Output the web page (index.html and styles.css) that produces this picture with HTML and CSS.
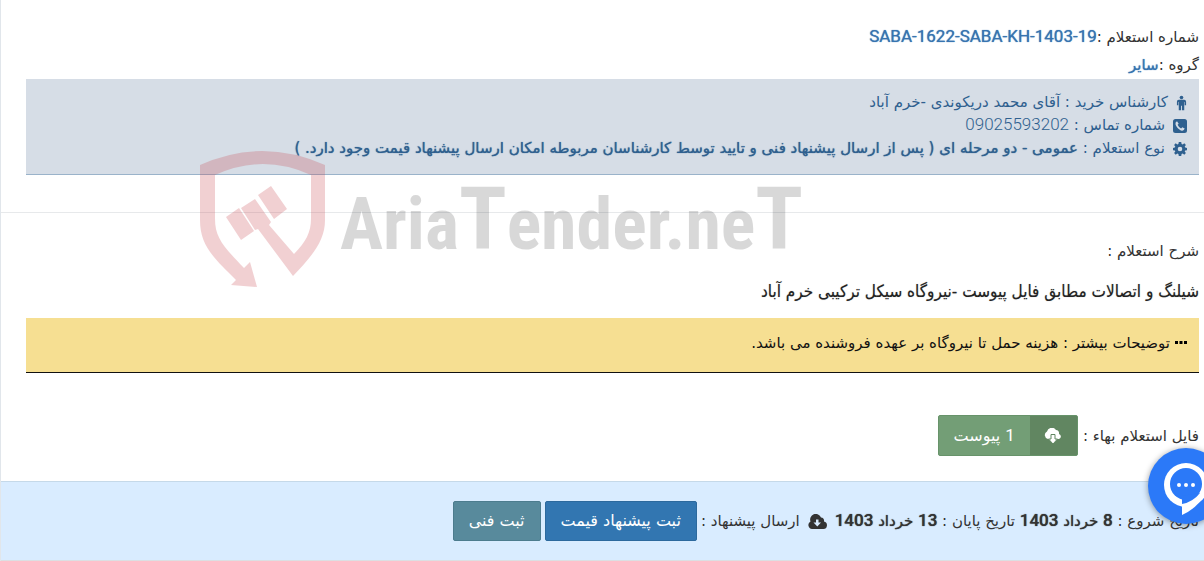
FILE: index.html
```html
<!DOCTYPE html>
<html lang="fa" dir="rtl">
<head>
<meta charset="utf-8">
<title>استعلام</title>
<link rel="stylesheet" href="styles.css">
</head>
<body>
<main class="page">
  <section class="summary">
    <p class="line">شماره استعلام :<a class="ref" href="#"><bdi class="num">SABA-1622-SABA-KH-1403-19</bdi></a></p>
    <p class="line">گروه :<a class="ref" href="#">سایر</a></p>
    <div class="info">
      <p class="info-row"><svg class="icon man" viewBox="0 0 12 16"><circle cx="6" cy="2" r="2"/><path d="M3 4.500h6q2 0 2 2v4H9.500V7H9v9H6.500v-5h-1v5H3V7h-.5v3.500H1v-4q0-2 2-2z"/></svg><span>کارشناس خرید : آقای محمد دریکوندی -خرم آباد</span></p>
      <p class="info-row"><svg class="icon" viewBox="0 0 14 14"><path fill-rule="evenodd" d="M2.500 0h9Q14 0 14 2.500v9q0 2.500-2.500 2.500h-9Q0 14 0 11.500v-9Q0 0 2.500 0zM4 2.300Q2 3.500 2.500 5.200C3.200 8 6 11 9 11.700q2 .3 2.700-2.100L9.300 8.200l-1.200 1.200Q5.500 8 4.600 5.700l1.100-1z"/></svg><span>شماره تماس : <span class="num">09025593202</span></span></p>
      <p class="info-row"><svg class="icon" viewBox="0 0 14 14"><path fill-rule="evenodd" d="M5.800 0h2.400l.4 1.900 1.100.5L11.300 1.300 12.900 3l-1.200 1.500.5 1.100 1.800.3v2.300l-1.800.3-.5 1.100 1.200 1.500-1.600 1.700-1.600-1.200-1.100.5L8.200 14H5.800l-.4-1.900-1.100-.5-1.600 1.200L1.100 11.100l1.200-1.500-.5-1.100L0 8.200V5.900l1.800-.3.500-1.100L1.100 3l1.600-1.700 1.600 1.100 1.100-.5zM7 4.700a2.300 2.300 0 1 0 0 4.600 2.300 2.300 0 0 0 0-4.600z"/></svg><span>نوع استعلام : <b class="strong">عمومی - دو مرحله ای ( پس از ارسال پیشنهاد فنی و تایید توسط کارشناسان مربوطه امکان ارسال پیشنهاد قیمت وجود دارد. )</b></span></p>
    </div>
  </section>
  <section class="details">
    <p class="line">شرح استعلام :</p>
    <h1 class="title">شیلنگ و اتصالات مطابق فایل پیوست -نیروگاه سیکل ترکیبی خرم آباد</h1>
    <div class="note"><svg class="dots" viewBox="0 0 12 4"><path d="M0 0h3v3H0zM4.500 0h3v3h-3zM9 0h3v3H9z"/></svg><span>توضیحات بیشتر : هزینه حمل تا نیروگاه بر عهده فروشنده می باشد.</span></div>
    <div class="files">
      <span>فایل استعلام بهاء :</span>
      <button class="btn attach" type="button"><span class="attach-icon"><svg class="cloud" viewBox="0 0 18 16"><path fill="#fff" d="M4 11a4 4 0 0 1-1-7.500A5 5 0 0 1 12 2a3.500 3.500 0 0 1 3 4 2.600 2.600 0 0 1 0 5z"/><path fill="#fff" stroke="#618661" d="M7 6.500h4V11h2.500L9 16l-4.500-5H7z"/></svg></span><span class="attach-text"><span class="num">1</span> پیوست</span></button>
    </div>
  </section>
  <footer class="actions">
    <span>تاریخ شروع : <b><span class="num">8</span> خرداد <span class="num">1403</span></b> تاریخ پایان : <b><span class="num">13</span> خرداد <span class="num">1403</span></b></span>
    <svg class="cloud-dark" viewBox="0 0 19 15"><path fill-rule="evenodd" d="M4 15a4 4 0 0 1-1.500-7.500A5.500 5.500 0 0 1 13 3.500a3.500 3.500 0 0 1 3 4A3.800 3.800 0 0 1 15 15zM8 5.500v3H5.500L9.300 12.500 13 8.500h-2.500v-3z"/></svg>
    <span>ارسال پیشنهاد :</span>
    <button class="btn price" type="button">ثبت پیشنهاد قیمت</button>
    <button class="btn tech" type="button">ثبت فنی</button>
  </footer>
  <div class="watermark" dir="ltr">
    <svg class="shield" viewBox="0 0 126 138"><path d="M0 15Q62-13 125 15V70C125 91 112 106 93 126L58 79 55 80 41 58 55 49 71 72 69 75 94 104C106 92 111 82 111 69V25Q63 3 15 25V69C15 88 24 97 44 118L50 112 57 137 31 135 36 130C14 108 0 96 0 70zM26 67L39 58 54 81 41 90zM58 45L71 36 87 59 74 69z"/></svg>
    <span class="wordmark">Aria<span class="tall">T</span>ender.ne<span class="tall">T</span></span>
  </div>
  <button class="chat" type="button" aria-label="گفتگو"><svg class="chat-icon" viewBox="0 0 76 76"><g fill="#fff"><circle cx="38" cy="37" r="22"/><path d="M34 54V67Q54 58 60 38z"/></g><circle cx="38" cy="36" r="16" fill="#2b79f8"/><path d="M34 48v8q11-2 18-11z" fill="#2b79f8"/><g fill="#fff"><circle cx="31" cy="37" r="2"/><circle cx="38" cy="37" r="2"/><circle cx="45" cy="37" r="2"/></g></svg></button>
</main>
</body>
</html>
```
FILE: styles.css
```css
* { box-sizing: border-box; }
body { margin: 0; background: #fff; color: #333; font: 400 15px/24px "DejaVu Sans", sans-serif; }
p, h1 { margin: 0; font-size: inherit; }
a { text-decoration: none; }
.num { font-family: Roboto, sans-serif; font-size: 17px; line-height: 1px; }
.info .num { font-weight: 300; }
.page { position: relative; border-left: 1px solid #e1e6eb; overflow: hidden; }
.summary { padding: 23px 5px 37px 25px; border-bottom: 1px solid #e7e9eb; }
.line { line-height: 28px; }
.ref { color: #3774b0; text-shadow: 0 0 1px #3774b0; }
.info { padding: 12px 12px 14px; background: #d6dde6; color: #2f608f; border-bottom: 1px solid #9ab3ca; }
.info-row { display: flex; align-items: center; gap: 8px; white-space: nowrap; line-height: 23px; }
.icon { width: 14px; height: 14px; fill: #2f608f; }
.man { width: 11px; height: 16px; }
.strong { font-weight: 400; text-shadow: 0 0 1px #2f608f; }
.details { padding: 24px 5px 25px 25px; }
.title { font-family: "DejaVu Sans Condensed", "DejaVu Sans", sans-serif; font-weight: 400; font-size: 17px; line-height: 53px; color: #222; text-shadow: 0 0 1px #2226; }
.note { display: flex; align-items: center; gap: 5px; height: 55px; padding: 0 12px 4px; background: #f6df92; color: #111; border-bottom: 1px solid #111; }
.dots { width: 12px; height: 4px; }
.files { display: flex; align-items: center; gap: 5px; padding-top: 42px; }
.btn { font: inherit; font-size: 16px; font-weight: 400; color: #fff; border-radius: 2px; border: 1px solid; }
.attach { display: flex; padding: 0; height: 41px; background: #739e76; border-color: #67936a; }
.attach-icon { display: flex; align-items: center; justify-content: center; width: 47px; align-self: stretch; background: #618661; }
.attach-text { padding: 0 15px; line-height: 39px; }
.cloud { width: 18px; height: 16px; }
.actions { display: flex; align-items: center; gap: 4px; height: 80px; padding: 0 5px; background: #d9ecff; border-top: 1px solid #c5d9e9; border-bottom: 1px solid #dcdfe2; white-space: nowrap; }
.actions b { font-weight: 500; text-shadow: 0 0 1px #333; }
.cloud-dark { width: 19px; height: 15px; fill: #333; margin: 0 4px; }
.price, .tech { height: 40px; padding: 0 15px; }
.price { background: #3276b1; border-color: #2c699d; }
.tech { background: #588a9c; border-color: #4c7c8e; }
.watermark { position: absolute; left: 199px; top: 150px; display: flex; gap: 14px; pointer-events: none; }
.shield { width: 126px; height: 138px; fill: #c53842; opacity: .23; }
.wordmark { font: 700 72px/150px "Roboto Condensed", Roboto, sans-serif; color: #000; opacity: .15; }
.tall { font-size: 88px; line-height: 1px; }
.chat { position: absolute; left: 1147px; top: 448px; width: 76px; height: 76px; padding: 0; border: 0; border-radius: 50%; background: #2b79f8; box-shadow: 0 1px 6px #0006; }
.chat-icon { display: block; width: 76px; height: 76px; }
```
